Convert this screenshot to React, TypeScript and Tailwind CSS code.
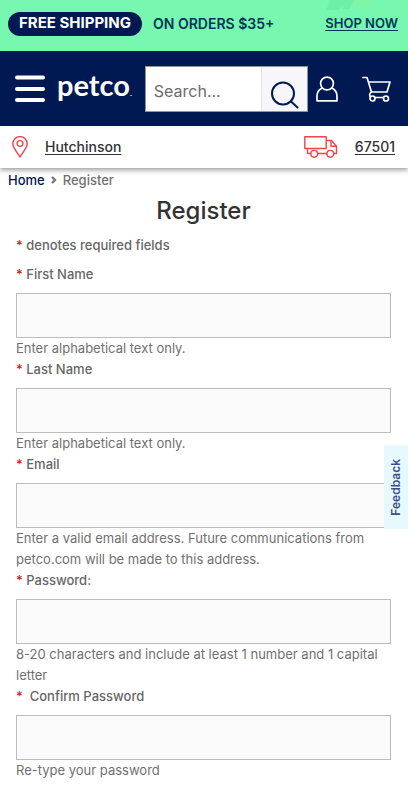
import type { HTMLInputTypeAttribute } from 'react'

type Field = {
  id: string
  label: string
  hint: string
  type: HTMLInputTypeAttribute
}

const FIELDS: Field[] = [
  { id: 'first-name', label: 'First Name', hint: 'Enter alphabetical text only.', type: 'text' },
  { id: 'last-name', label: 'Last Name', hint: 'Enter alphabetical text only.', type: 'text' },
  {
    id: 'email',
    label: 'Email',
    hint: 'Enter a valid email address. Future communications from petco.com will be made to this address.',
    type: 'email',
  },
  {
    id: 'password',
    label: 'Password:',
    hint: '8-20 characters and include at least 1 number and 1 capital letter',
    type: 'password',
  },
  { id: 'confirm-password', label: '\u00a0Confirm Password', hint: 'Re-type your password', type: 'password' },
]

function MenuIcon() {
  return (
    <svg className="h-7 w-[30px]" viewBox="0 0 30 28" stroke="white" strokeWidth="4" strokeLinecap="round">
      <path d="M2 2.500h26M2 14h26M2 25h26" />
    </svg>
  )
}

function SearchIcon() {
  return (
    <svg className="h-7 w-7" viewBox="0 0 28 28" fill="none" stroke="#001952" strokeWidth="2" strokeLinecap="round">
      <circle cx="12" cy="12.500" r="11" />
      <path d="M20 20.500l6.500 6" />
    </svg>
  )
}

function UserIcon() {
  return (
    <svg className="h-[26px] w-[22px]" viewBox="0 0 22 26" fill="none" stroke="white" strokeWidth="1.700" strokeLinejoin="round">
      <circle cx="11" cy="7.500" r="6.400" />
      <path d="M6.300 12C3 13.500 1 16.500 1 20v4.800h20V20c0-3.500-2-6.500-5.300-8" />
    </svg>
  )
}

function CartIcon() {
  return (
    <svg className="h-[26px] w-[29px]" viewBox="0 0 29 26" fill="none" stroke="white" strokeWidth="1.700" strokeLinecap="round" strokeLinejoin="round">
      <path d="M1 1.500h4L9.500 16h15.500L28 6H6.500" />
      <path d="M9.500 16c-2.500 1-2.500 5 0 5.500h14" />
      <circle cx="10.500" cy="22.500" r="2.500" fill="#001952" />
      <circle cx="24" cy="22.500" r="2.500" fill="#001952" />
    </svg>
  )
}

function PinIcon() {
  return (
    <svg className="h-[22px] w-4" viewBox="0 0 16 22" fill="none" stroke="#f0434a" strokeWidth="1.400">
      <path d="M8 21C5.500 16.500.8 12 .8 7.800a7.200 7.200 0 0 1 14.400 0C15.200 12 10.500 16.500 8 21z" />
      <circle cx="8" cy="7.500" r="2.900" />
    </svg>
  )
}

function TruckIcon() {
  return (
    <svg className="h-[22px] w-[34px]" viewBox="0 0 34 22" fill="none" stroke="#f0434a" strokeWidth="1.400" strokeLinejoin="round">
      <path d="M.8.8h21.400v11.700H.8z" />
      <path d="M22.200 4.500h5.300l5 6v7h-2.700M3.500 12.500v5h3.200M13.700 17.500h9.100" />
      <path d="M27 4.500v5.800h5.500" />
      <circle cx="10.200" cy="17.800" r="3.400" />
      <circle cx="26.300" cy="17.800" r="3.400" />
    </svg>
  )
}

function PromoBanner() {
  return (
    <div className="relative flex h-[51px] items-center bg-[#78f7b0] px-2 pb-1 text-[#003459]">
      <svg className="absolute top-0 right-6 h-[13px] w-[60px]" viewBox="0 0 60 13">
        <path d="M7 0h22l-3 9h-8l1-4-4 5H2z" fill="#60e3a0" opacity="0.400" />
        <path d="M30 0h20l-8 9H28z" fill="#92ee87" opacity="0.250" />
      </svg>
      <span className="flex h-6 items-center rounded-full bg-[#001952] px-[11px] text-[15px] font-bold text-white">
        FREE SHIPPING
      </span>
      <span className="ml-[11px] text-sm font-semibold">ON ORDERS $35+</span>
      <a href="#shop" className="relative mr-[2px] ml-auto text-[13px] font-semibold underline underline-offset-2">
        SHOP NOW
      </a>
    </div>
  )
}

function Header() {
  return (
    <header className="flex h-[75px] items-center bg-[#001952] pr-[17px] pl-[15px]">
      <button type="button" aria-label="Menu">
        <MenuIcon />
      </button>
      <a href="#home" className="ml-3 flex items-baseline font-['Lato'] text-[29px] leading-8 font-bold text-white">
        petco<span className="text-[8px]">.</span>
      </a>
      <form className="ml-[13px] flex h-[46px] min-w-0 flex-1 border border-[#8e949c] bg-white">
        <input
          type="search"
          aria-label="Search"
          placeholder="Search..."
          className="min-w-0 flex-1 px-2 pt-1 text-base text-[#555] outline-none placeholder:text-[#6d6d6d]"
        />
        <button type="submit" aria-label="Submit search" className="flex w-[46px] items-center justify-center border-l border-[#e4e4ea] bg-[#f7f7fb] pt-3">
          <SearchIcon />
        </button>
      </form>
      <button type="button" aria-label="Account" className="ml-2">
        <UserIcon />
      </button>
      <button type="button" aria-label="Cart" className="ml-6">
        <CartIcon />
      </button>
    </header>
  )
}

function LocationBar() {
  return (
    <div className="flex h-[42px] items-center bg-white pr-[13px] pl-3 text-sm font-medium text-[#333] shadow-[0_2px_5px_rgba(0,0,0,0.4)]">
      <PinIcon />
      <a href="#store" className="ml-[17px] underline underline-offset-2">
        Hutchinson
      </a>
      <span className="ml-auto">
        <TruckIcon />
      </span>
      <a href="#zip" className="ml-[17px] underline underline-offset-2">
        67501
      </a>
    </div>
  )
}

function FormField({ field }: { field: Field }) {
  return (
    <div>
      <label htmlFor={field.id} className="mb-2 block text-[13px] leading-[21px] font-medium text-[#666]">
        <span className="text-[#cc2020]">*</span> {field.label}
      </label>
      <input
        id={field.id}
        type={field.type}
        required
        aria-describedby={`${field.id}-hint`}
        className="block h-[45px] w-full border border-[#b9bdc0] bg-[#fafafa] px-3 text-base text-[#333]"
      />
      <p id={`${field.id}-hint`} className="text-[13px] leading-[21px] text-[#707070]">
        {field.hint}
      </p>
    </div>
  )
}

export default function App() {
  return (
    <div className="relative min-h-screen bg-white font-['Inter',sans-serif]">
      <PromoBanner />
      <Header />
      <LocationBar />

      <nav aria-label="Breadcrumb" className="mt-[2px] flex items-center gap-[6px] px-2 text-[13px] leading-5 font-medium">
        <a href="#home" className="text-[#001952]">Home</a>
        <svg className="h-2 w-[6px]" viewBox="0 0 6 8" fill="none" stroke="#777" strokeWidth="2.400">
          <path d="M1 1l3 3-3 3" />
        </svg>
        <span className="text-[#707070]">Register</span>
      </nav>

      <main className="pr-[17px] pl-4">
        <h1 className="mb-[6px] pt-[3px] text-center text-2xl leading-9 font-medium text-[#333]">Register</h1>
        <p className="mb-2 text-[13px] leading-[21px] font-medium text-[#666]">
          <span className="text-[#cc2020]">*</span> denotes required fields
        </p>
        <form>
          {FIELDS.map((field) => (
            <FormField key={field.id} field={field} />
          ))}
        </form>
      </main>

      <button
        type="button"
        className="absolute top-[445px] right-0 flex h-[84px] w-6 items-center justify-center bg-[#e6f9ff] text-xs font-semibold text-[#3e4f85]"
      >
        <span className="rotate-180 [writing-mode:vertical-rl]">Feedback</span>
      </button>
    </div>
  )
}
